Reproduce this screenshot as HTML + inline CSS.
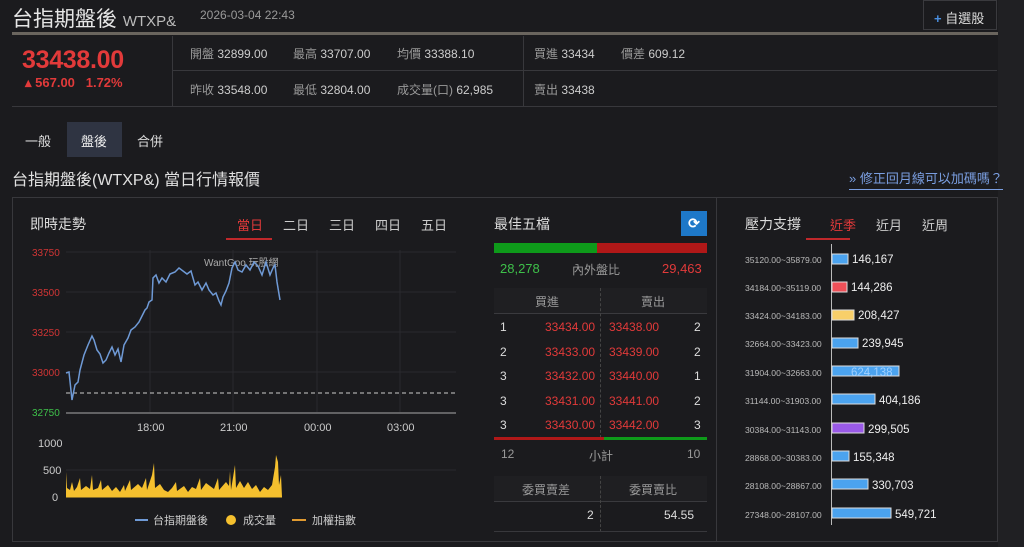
<!DOCTYPE html>
<html><head><meta charset="utf-8"><style>
*{margin:0;padding:0;box-sizing:border-box}
body{width:1024px;height:547px;background:#1b1b1e;font-family:"Liberation Sans","Noto Sans CJK TC",sans-serif;color:#ccc;position:relative;overflow:hidden}
.a{position:absolute;white-space:nowrap}
.r{color:#e23a3a}.g{color:#3ec04a}.lb{color:#9a9a9a}
.ln{position:absolute;background:#38383c}
</style></head><body>
<div class="a" style="left:998px;top:0;width:26px;height:547px;background:#202023"></div>
<div class="a" style="left:12px;top:3px;font-size:21px;color:#e6e6e6">台指期盤後 <span style="font-size:15px;color:#bbb">WTXP&amp;</span></div>
<div class="a" style="left:200px;top:8px;font-size:12px;color:#999">2026-03-04 22:43</div>
<div class="a" style="left:923px;top:0;width:74px;height:30px;border:1px solid #3a3a3e;font-size:13px;color:#ddd;padding:7px 0 0 10px"><span style="color:#4a8fe0;font-weight:bold">+</span> 自選股</div>
<div class="ln" style="left:12px;top:32px;width:986px;height:3px;background:#6a655e"></div>
<div class="a r" style="left:22px;top:46px;font-size:25px;font-weight:bold;letter-spacing:-0.3px">33438.00</div>
<div class="a r" style="left:25px;top:75px;font-size:13px;font-weight:bold">▴ 567.00 &nbsp; 1.72%</div>
<div class="ln" style="left:172px;top:36px;width:1px;height:70px"></div>
<div class="ln" style="left:523px;top:36px;width:1px;height:70px"></div>
<div class="ln" style="left:172px;top:70px;width:825px;height:1px"></div>
<div class="ln" style="left:12px;top:106px;width:985px;height:1px"></div>
<div class="a" style="left:190px;top:45px;font-size:12px"><span class="lb">開盤</span> 32899.00</div>
<div class="a" style="left:293px;top:45px;font-size:12px"><span class="lb">最高</span> 33707.00</div>
<div class="a" style="left:397px;top:45px;font-size:12px"><span class="lb">均價</span> 33388.10</div>
<div class="a" style="left:534px;top:45px;font-size:12px"><span class="lb">買進</span> 33434</div>
<div class="a" style="left:621px;top:45px;font-size:12px"><span class="lb">價差</span> 609.12</div>
<div class="a" style="left:190px;top:81px;font-size:12px"><span class="lb">昨收</span> 33548.00</div>
<div class="a" style="left:293px;top:81px;font-size:12px"><span class="lb">最低</span> 32804.00</div>
<div class="a" style="left:397px;top:81px;font-size:12px"><span class="lb">成交量(口)</span> 62,985</div>
<div class="a" style="left:534px;top:81px;font-size:12px"><span class="lb">賣出</span> 33438</div>
<div class="a" style="left:67px;top:122px;width:55px;height:35px;background:#2f3442"></div>
<div class="a" style="left:25px;top:131px;font-size:13px;color:#ddd">一般</div>
<div class="a" style="left:81px;top:131px;font-size:13px;color:#eee">盤後</div>
<div class="a" style="left:137px;top:131px;font-size:13px;color:#ddd">合併</div>
<div class="a" style="left:12px;top:166px;font-size:16px;color:#e0e0e0">台指期盤後(WTXP&amp;) 當日行情報價</div>
<div class="a" style="left:849px;top:168px;font-size:13px;color:#7a9ee0;border-bottom:1px solid #7a9ee0;padding-bottom:2px">» 修正回月線可以加碼嗎？</div>
<div class="a" style="left:12px;top:197px;width:986px;height:345px;border:1px solid #38383c"></div>
<div class="ln" style="left:716px;top:197px;width:1px;height:345px"></div>
<div class="a" style="left:30px;top:214px;font-size:14px;color:#ddd">即時走勢</div>
<div class="a r" style="left:237px;top:215px;font-size:13px">當日</div>
<div class="a" style="left:226px;top:238px;width:46px;height:2px;background:#c0282b"></div>
<div class="a" style="left:283px;top:215px;font-size:13px;color:#ccc">二日</div>
<div class="a" style="left:329px;top:215px;font-size:13px;color:#ccc">三日</div>
<div class="a" style="left:375px;top:215px;font-size:13px;color:#ccc">四日</div>
<div class="a" style="left:421px;top:215px;font-size:13px;color:#ccc">五日</div>
<svg class="a" style="left:0;top:0" width="480" height="547">
<g font-size="10" font-family="Liberation Sans" fill="#d03535">
<text x="32" y="256">33750</text><text x="32" y="296">33500</text><text x="32" y="336">33250</text><text x="32" y="376">33000</text>
<text x="32" y="416" fill="#3ec04a">32750</text></g>
<g stroke="#2a2a2e"><line x1="66" y1="252" x2="456" y2="252"/><line x1="66" y1="292" x2="456" y2="292"/><line x1="66" y1="332" x2="456" y2="332"/><line x1="66" y1="372" x2="456" y2="372"/>
<line x1="150" y1="250" x2="150" y2="412"/><line x1="233" y1="250" x2="233" y2="412"/><line x1="317" y1="250" x2="317" y2="412"/><line x1="400" y1="250" x2="400" y2="412"/>
<line x1="66" y1="470" x2="456" y2="470"/></g>
<line x1="66" y1="393" x2="456" y2="393" stroke="#ccc" stroke-dasharray="4,3"/>
<line x1="66" y1="413" x2="456" y2="413" stroke="#aaa"/>
<text x="204" y="266" font-size="10" fill="#aaa" font-family="Liberation Sans">WantGoo 玩股網</text>
<polyline fill="none" stroke="#6f9ad6" stroke-width="1.5" points="66,373 69,372 72,400 75,385 78,382 80,370 84,355 88,345 92,336 94,340 97,350 100,354 103,363 106,360 109,353 112,347 115,355 118,349 121,362 124,345 128,338 131,330 135,327 139,322 142,316 145,310 147,308 149,302 152,300 153,278 156,275 159,283 162,278 166,282 170,274 175,272 179,268 183,271 187,274 191,271 195,285 198,282 202,290 206,283 209,290 213,295 216,293 219,301 221,305 223,297 226,291 229,283 232,268 235,262 238,270 242,272 246,265 250,270 254,262 258,266 262,275 266,262 270,275 273,268 275,265 277,282 280,300"/>
<g font-size="11" fill="#ccc" font-family="Liberation Sans"><text x="137" y="431">18:00</text><text x="220" y="431">21:00</text><text x="304" y="431">00:00</text><text x="387" y="431">03:00</text>
<text x="38" y="447">1000</text><text x="43" y="474">500</text><text x="52" y="501">0</text></g>
<path fill="#f5c02e" d="M66,497 L66,472 L67,488 L70,490 L72,482 L74,491 L77,487 L80,478 L81,490 L86,486 L90,489 L92,475 L93,490 L98,488 L101,480 L102,490 L108,485 L112,491 L116,487 L120,492 L124,485 L125,491 L130,480 L131,490 L138,484 L142,488 L146,478 L147,490 L152,475 L154,463 L155,488 L160,484 L164,490 L168,492 L172,488 L176,482 L177,491 L184,486 L188,492 L192,487 L196,489 L200,478 L201,490 L206,483 L210,486 L214,489 L218,478 L219,490 L226,482 L229,486 L230,471 L231,490 L235,465 L236,488 L240,481 L244,488 L248,482 L252,489 L256,485 L260,492 L264,487 L268,490 L272,485 L275,467 L276,455 L278,462 L279,485 L281,475 L282,497 Z"/>
<line x1="66" y1="497" x2="282" y2="497" stroke="#f5c02e"/>
<line x1="135" y1="520" x2="148" y2="520" stroke="#6f9ad6" stroke-width="2"/>
<circle cx="231" cy="520" r="5" fill="#f5c02e"/>
<line x1="292" y1="520" x2="306" y2="520" stroke="#e09a30" stroke-width="2"/>
<g font-size="11" fill="#ccc"><text x="153" y="524">台指期盤後</text><text x="243" y="524">成交量</text><text x="312" y="524">加權指數</text></g>
</svg>
<div class="a" style="left:494px;top:214px;font-size:14px;color:#ddd">最佳五檔</div>
<div class="a" style="left:681px;top:211px;width:26px;height:25px;background:#1e78c8;color:#fff;font-size:14px;text-align:center;line-height:25px;font-weight:bold">⟳</div>
<div class="a" style="left:494px;top:243px;width:103px;height:10px;background:#0e9a1a"></div>
<div class="a" style="left:597px;top:243px;width:110px;height:10px;background:#b01818"></div>
<div class="a g" style="left:500px;top:261px;font-size:13px">28,278</div>
<div class="a lb" style="left:572px;top:261px;font-size:12px">內外盤比</div>
<div class="a r" style="left:662px;top:261px;font-size:13px">29,463</div>
<div class="a" style="left:494px;top:288px;width:213px;height:26px;background:#1f1f22;border-bottom:1px solid #3a3a3e"></div>
<div class="a lb" style="left:535px;top:293px;font-size:12px">買進</div>
<div class="a lb" style="left:641px;top:293px;font-size:12px">賣出</div>
<div class="a" style="left:600px;top:288px;height:150px;border-left:1px dashed #444"></div>
<div class="a" style="left:500px;top:315px;font-size:12px;line-height:24.5px;color:#ddd">1<br>2<br>3<br>3<br>3</div>
<div class="a r" style="left:545px;top:315px;font-size:12px;line-height:24.5px">33434.00<br>33433.00<br>33432.00<br>33431.00<br>33430.00</div>
<div class="a r" style="left:609px;top:315px;font-size:12px;line-height:24.5px">33438.00<br>33439.00<br>33440.00<br>33441.00<br>33442.00</div>
<div class="a" style="left:694px;top:315px;font-size:12px;line-height:24.5px;color:#ddd">2<br>2<br>1<br>2<br>3</div>
<div class="a" style="left:494px;top:437px;width:110px;height:3px;background:#b01818"></div>
<div class="a" style="left:604px;top:437px;width:103px;height:3px;background:#0e9a1a"></div>
<div class="a lb" style="left:501px;top:447px;font-size:12px">12</div>
<div class="a lb" style="left:589px;top:447px;font-size:12px">小計</div>
<div class="a lb" style="left:687px;top:447px;font-size:12px">10</div>
<div class="a" style="left:494px;top:476px;width:213px;height:26px;background:#1f1f22;border-bottom:1px solid #3a3a3e"></div>
<div class="a" style="left:600px;top:476px;height:56px;border-left:1px dashed #444"></div>
<div class="a lb" style="left:522px;top:481px;font-size:12px">委買賣差</div>
<div class="a lb" style="left:629px;top:481px;font-size:12px">委買賣比</div>
<div class="a" style="left:587px;top:508px;font-size:12px;color:#ddd">2</div>
<div class="a" style="left:664px;top:508px;font-size:12px;color:#ddd">54.55</div>
<div class="ln" style="left:494px;top:531px;width:213px;height:1px"></div>
<div class="a" style="left:745px;top:214px;font-size:14px;color:#ddd">壓力支撐</div>
<div class="a r" style="left:830px;top:215px;font-size:13px">近季</div>
<div class="a" style="left:806px;top:238px;width:44px;height:2px;background:#c0282b"></div>
<div class="a" style="left:876px;top:215px;font-size:13px;color:#ccc">近月</div>
<div class="a" style="left:922px;top:215px;font-size:13px;color:#ccc">近周</div>
<div class="a" style="left:831px;top:244px;width:1px;height:281px;background:#bbb"></div>
<svg class="a" style="left:717px;top:244px" width="250" height="285" font-family="Liberation Sans" font-size="8.6">
<g fill="#bbb">
<text x="28" y="19">35120.00~35879.00</text><text x="28" y="47">34184.00~35119.00</text><text x="28" y="75">33424.00~34183.00</text><text x="28" y="103">32664.00~33423.00</text><text x="28" y="132">31904.00~32663.00</text><text x="28" y="160">31144.00~31903.00</text><text x="28" y="189">30384.00~31143.00</text><text x="28" y="217">28868.00~30383.00</text><text x="28" y="245">28108.00~28867.00</text><text x="28" y="274">27348.00~28107.00</text></g>
<g stroke="#ddd" stroke-width="1">
<rect x="115" y="10" width="16" height="10" fill="#4ba3ef"/>
<rect x="115" y="38" width="15" height="10" fill="#ee5058"/>
<rect x="115" y="66" width="22" height="10" fill="#f8cf6a"/>
<rect x="115" y="94" width="26" height="10" fill="#4ba3ef"/>
<rect x="115" y="122" width="67" height="10" fill="#4ba3ef"/>
<rect x="115" y="150" width="43" height="10" fill="#4ba3ef"/>
<rect x="115" y="179" width="32" height="10" fill="#9a5ae8"/>
<rect x="115" y="207" width="17" height="10" fill="#4ba3ef"/>
<rect x="115" y="235" width="36" height="10" fill="#4ba3ef"/>
<rect x="115" y="264" width="59" height="10" fill="#4ba3ef"/></g>
<g fill="#eee" font-size="11.5">
<text x="135" y="19">146,167</text><text x="134" y="47">144,286</text><text x="141" y="75">208,427</text><text x="145" y="103">239,945</text><text x="134" y="132" fill="#9fd0ff">624,138</text><text x="162" y="160">404,186</text><text x="151" y="189">299,505</text><text x="136" y="217">155,348</text><text x="155" y="245">330,703</text><text x="178" y="274">549,721</text></g>
</svg>
</body></html>
